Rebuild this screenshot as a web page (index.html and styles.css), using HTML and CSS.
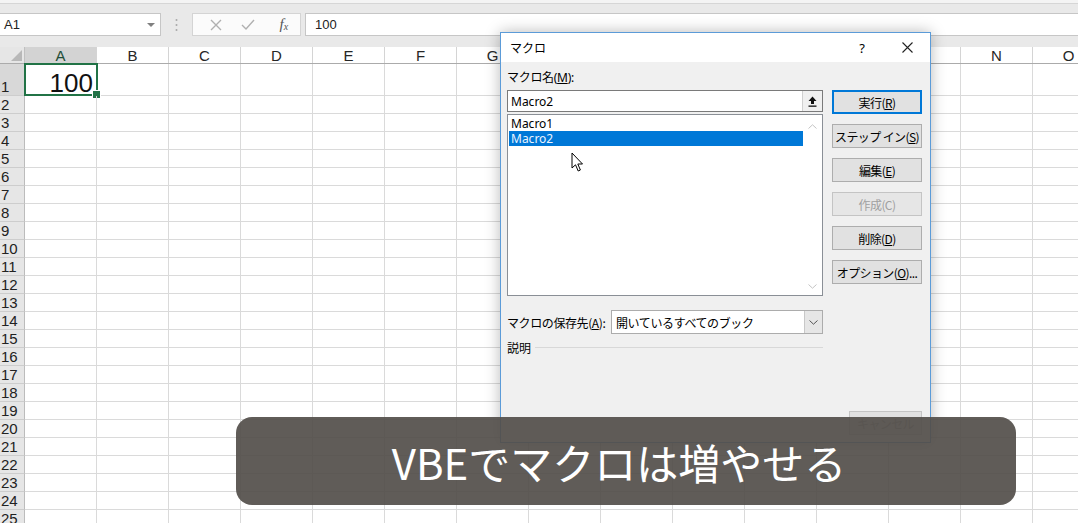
FILE: index.html
```html
<!DOCTYPE html>
<html lang="ja">
<head>
  <meta charset="UTF-8">
  <title>マクロ</title>
  <link rel="stylesheet" href="styles.css">
</head>
<body>

  <div class="ribbon-edge"></div>

  <div class="formula-row">
    <div class="name-box"><span>A1</span><span class="caret"></span></div>
    <div class="grip">
      <svg width="3" height="14" viewBox="0 0 3 14"><circle cx="1.5" cy="2" r="1" fill="#a8a8a8"/><circle cx="1.5" cy="7" r="1" fill="#a8a8a8"/><circle cx="1.5" cy="12" r="1" fill="#a8a8a8"/></svg>
    </div>
    <div class="fx-box">
      <span class="fx-icon">
        <svg width="12" height="12" viewBox="0 0 12 12"><path d="M1 1 L11 11 M11 1 L1 11" stroke="#b0b0b0" stroke-width="1.4"/></svg>
      </span>
      <span class="fx-icon">
        <svg width="14" height="12" viewBox="0 0 14 12"><path d="M1 6 L5 10 L13 1" stroke="#b0b0b0" stroke-width="1.4" fill="none"/></svg>
      </span>
      <span class="fx-icon fx-text"><i>f<sub>x</sub></i></span>
    </div>
    <div class="formula-input">100</div>
  </div>

  <div class="gap-bar"></div>

  <div class="sheet">
    <div class="col-headers">
      <div class="corner"></div>
      <div class="col-h sel">A</div>
      <div class="col-h">B</div>
      <div class="col-h">C</div>
      <div class="col-h">D</div>
      <div class="col-h">E</div>
      <div class="col-h">F</div>
      <div class="col-h">G</div>
      <div class="col-h">H</div>
      <div class="col-h">I</div>
      <div class="col-h">J</div>
      <div class="col-h">K</div>
      <div class="col-h">L</div>
      <div class="col-h">M</div>
      <div class="col-h">N</div>
      <div class="col-h">O</div>
    </div>

    <div class="row r1">
      <div class="row-h">1</div>
      <div class="cells"><div class="active-cell">100</div></div>
    </div>
    <div class="row"><div class="row-h">2</div><div class="cells"></div></div>
    <div class="row"><div class="row-h">3</div><div class="cells"></div></div>
    <div class="row"><div class="row-h">4</div><div class="cells"></div></div>
    <div class="row"><div class="row-h">5</div><div class="cells"></div></div>
    <div class="row"><div class="row-h">6</div><div class="cells"></div></div>
    <div class="row"><div class="row-h">7</div><div class="cells"></div></div>
    <div class="row"><div class="row-h">8</div><div class="cells"></div></div>
    <div class="row"><div class="row-h">9</div><div class="cells"></div></div>
    <div class="row"><div class="row-h">10</div><div class="cells"></div></div>
    <div class="row"><div class="row-h">11</div><div class="cells"></div></div>
    <div class="row"><div class="row-h">12</div><div class="cells"></div></div>
    <div class="row"><div class="row-h">13</div><div class="cells"></div></div>
    <div class="row"><div class="row-h">14</div><div class="cells"></div></div>
    <div class="row"><div class="row-h">15</div><div class="cells"></div></div>
    <div class="row"><div class="row-h">16</div><div class="cells"></div></div>
    <div class="row"><div class="row-h">17</div><div class="cells"></div></div>
    <div class="row"><div class="row-h">18</div><div class="cells"></div></div>
    <div class="row"><div class="row-h">19</div><div class="cells"></div></div>
    <div class="row"><div class="row-h">20</div><div class="cells"></div></div>
    <div class="row"><div class="row-h">21</div><div class="cells"></div></div>
    <div class="row"><div class="row-h">22</div><div class="cells"></div></div>
    <div class="row"><div class="row-h">23</div><div class="cells"></div></div>
    <div class="row"><div class="row-h">24</div><div class="cells"></div></div>
    <div class="row"><div class="row-h">25</div><div class="cells"></div></div>
  </div>

  <!-- macro dialog -->
  <div class="dialog">
    <div class="dlg-title">
      <span>マクロ</span>
      <span class="dlg-help">?</span>
      <span class="dlg-close">
        <svg width="11" height="11" viewBox="0 0 11 11"><path d="M0.5 0.5 L10.5 10.5 M10.5 0.5 L0.5 10.5" stroke="#222" stroke-width="1.1"/></svg>
      </span>
    </div>

    <div class="dlg-body">
      <div class="dlg-main">
        <div class="dlg-left">
          <div class="lbl">マクロ名(<u>M</u>):</div>
          <div class="name-input">
            <span>Macro2</span>
            <span class="up-btn">
              <svg width="9" height="11" viewBox="0 0 9 11"><path d="M4.5 0.5 L8.5 5 L6 5 L6 8 L3 8 L3 5 L0.5 5 Z" fill="#111"/><rect x="0.5" y="9.5" width="8" height="1.3" fill="#111"/></svg>
            </span>
          </div>
          <div class="macro-list">
            <div class="items">
              <div class="item">Macro1</div>
              <div class="item selected">Macro2</div>
            </div>
            <div class="scroll">
              <svg width="9" height="5" viewBox="0 0 9 5"><path d="M0.5 4.5 L4.5 0.8 L8.5 4.5" stroke="#c4c4c4" fill="none"/></svg>
              <svg width="9" height="5" viewBox="0 0 9 5"><path d="M0.5 0.5 L4.5 4.2 L8.5 0.5" stroke="#c4c4c4" fill="none"/></svg>
            </div>
          </div>
        </div>

        <div class="dlg-right">
          <div class="btn default">実行(<u>R</u>)</div>
          <div class="btn">ステップ イン(<u>S</u>)</div>
          <div class="btn">編集(<u>E</u>)</div>
          <div class="btn disabled">作成(C)</div>
          <div class="btn">削除(<u>D</u>)</div>
          <div class="btn">オプション(<u>O</u>)...</div>
        </div>
      </div>

      <div class="store-row">
        <span class="store-lbl">マクロの保存先(<u>A</u>):</span>
        <div class="select">
          <span>開いているすべてのブック</span>
          <span class="select-btn">
            <svg width="9" height="5" viewBox="0 0 9 5"><path d="M0.5 0.5 L4.5 4.2 L8.5 0.5" stroke="#555" fill="none"/></svg>
          </span>
        </div>
      </div>

      <div class="desc-row">
        <span>説明</span>
        <span class="desc-line"></span>
      </div>

      <div class="dlg-foot">
        <div class="btn cancel">キャンセル</div>
      </div>
    </div>
  </div>

  <svg class="cursor" width="13" height="21" viewBox="0 0 13 21">
    <path d="M1 1 L1 16 L4.5 12.8 L7.2 19 L9.4 18 L6.8 12 L11.5 12 Z" fill="#fff" stroke="#000" stroke-width="1" stroke-linejoin="round"/>
  </svg>

  <div class="caption">VBEでマクロは増やせる</div>

</body>
</html>
```

FILE: styles.css
```css
* {
  box-sizing: border-box;
}

html, body {
  margin: 0;
}

body {
  width: 1078px;
  height: 523px;
  overflow: hidden;
  position: relative;
  background: #ffffff;
  font-family: "Liberation Sans", "Noto Sans CJK JP", sans-serif;
  color: #222;
}

/* top of the window */
.ribbon-edge {
  height: 12px;
  border-top: 3px solid #f4f4f4;
  background: linear-gradient(#d6d6d6 0 1px, #e9e9e9 1px);
}

.formula-row {
  display: flex;
  align-items: center;
  height: 25px;
  background: #e9e9e9;
}

.name-box {
  width: 161px;
  height: 23px;
  background: #fff;
  border: 1px solid #c6c6c6;
  border-left: none;
  display: flex;
  align-items: center;
  justify-content: space-between;
  padding: 0 5px 0 4px;
  font-size: 13px;
}

.caret {
  border-left: 4px solid transparent;
  border-right: 4px solid transparent;
  border-top: 4px solid #808080;
}

.grip {
  width: 31px;
  display: flex;
  justify-content: center;
}

.fx-box {
  width: 109px;
  height: 23px;
  background: #fbfbfb;
  border: 1px solid #d4d4d4;
  display: flex;
  align-items: center;
  padding-left: 7px;
}

.fx-icon {
  width: 35px;
  display: flex;
  justify-content: center;
}

.fx-text {
  font-family: "Liberation Serif", serif;
  font-size: 15px;
  color: #555;
  margin-left: 3px;
}

.fx-text sub {
  font-size: 10px;
  vertical-align: -1px;
}

.formula-input {
  margin-left: 4px;
  flex: 1;
  height: 23px;
  background: #fff;
  border: 1px solid #c6c6c6;
  border-right: none;
  padding-left: 9px;
  font-size: 13px;
  line-height: 21px;
}

.gap-bar {
  height: 10px;
  background: #e9e9e9;
}

/* sheet */
.col-headers {
  display: flex;
  height: 17px;
  background: #fff;
  border-bottom: 1px solid #ababab;
}

.corner {
  width: 25px;
  flex: none;
  background: #e6e6e6;
  border-right: 1px solid #c0c0c0;
  position: relative;
}

.corner::after {
  content: "";
  position: absolute;
  right: 2px;
  bottom: 2px;
  border-left: 11px solid transparent;
  border-bottom: 11px solid #b8b8b8;
}

.col-h {
  width: 72px;
  flex: none;
  border-right: 1px solid #d4d4d4;
  text-align: center;
  font-size: 15px;
  line-height: 18px;
  color: #262626;
}

.col-h.sel {
  background: #d3d3d3;
  color: #1f4e38;
}

.row {
  display: flex;
  height: 18px;
}

.row.r1 {
  height: 32px;
}

.row-h {
  width: 25px;
  flex: none;
  background: #e6e6e6;
  border-right: 1px solid #bcbcbc;
  border-bottom: 1px solid #cdcdcd;
  font-size: 15px;
  line-height: 16px;
  padding-left: 1px;
  display: flex;
  align-items: flex-end;
}

.r1 .row-h {
  background: #d8d8d8;
}

.cells {
  flex: 1;
  position: relative;
  background: repeating-linear-gradient(90deg, transparent 0 71px, #dadada 71px 72px);
  border-bottom: 1px solid #dadada;
}

.active-cell {
  position: absolute;
  left: -1px;
  top: -1px;
  width: 74px;
  height: 33px;
  border: 2px solid #217346;
  font-size: 26px;
  line-height: 26px;
  padding-top: 5px;
  text-align: right;
  padding-right: 3px;
  color: #111;
}

.active-cell::after {
  content: "";
  position: absolute;
  right: -5px;
  bottom: -5px;
  width: 7px;
  height: 7px;
  background: #217346;
  border: 1px solid #fff;
}

/* dialog */
.dialog {
  position: absolute;
  left: 500px;
  top: 32px;
  width: 431px;
  height: 411px;
  background: #f0f0f0;
  border: 1px solid #5b9bd8;
  box-shadow: 0 0 14px rgba(0, 0, 0, 0.28);
  font-family: "Noto Sans", "Noto Sans CJK JP", sans-serif;
  font-size: 12px;
  color: #000;
}

.dlg-title {
  height: 29px;
  background: #fff;
  display: flex;
  align-items: center;
  padding-left: 9px;
  font-family: "Noto Sans CJK JP", sans-serif;
}

.dlg-help {
  margin-left: auto;
  width: 20px;
  text-align: center;
  font-family: "Noto Sans", sans-serif;
  font-size: 13px;
  margin-right: 12px;
}

.dlg-close {
  width: 46px;
  display: flex;
  justify-content: center;
}

.dlg-body {
  padding: 9px 8px 0 6px;
}

.dlg-main {
  display: flex;
  gap: 9px;
}

.dlg-left {
  width: 316px;
}

.lbl {
  height: 14px;
  line-height: 14px;
  margin-bottom: 5px;
  letter-spacing: -0.3px;
}

.name-input {
  height: 22px;
  border: 1px solid #7a7a7a;
  background: #fff;
  display: flex;
  align-items: center;
  padding-left: 3px;
}

.up-btn {
  margin-left: auto;
  width: 20px;
  height: 20px;
  background: #f0f0f0;
  border-left: 1px solid #d0d0d0;
  display: flex;
  align-items: center;
  justify-content: center;
}

.macro-list {
  margin-top: 2px;
  height: 182px;
  border: 1px solid #8a8f96;
  background: #fff;
  display: flex;
}

.items {
  flex: 1;
  padding: 1px 0 0 1px;
}

.item {
  height: 15px;
  line-height: 15px;
  padding-left: 2px;
}

.item.selected {
  background: #0078d7;
  color: #eaf4ff;
}

.scroll {
  width: 19px;
  display: flex;
  flex-direction: column;
  justify-content: space-between;
  align-items: center;
  padding: 9px 0 6px;
}

.dlg-right {
  padding-top: 19px;
  display: flex;
  flex-direction: column;
  gap: 10px;
}

.btn {
  width: 90px;
  height: 24px;
  border: 1px solid #adadad;
  background: #e1e1e1;
  display: flex;
  align-items: center;
  justify-content: center;
  white-space: nowrap;
  letter-spacing: -0.6px;
  font-family: "Noto Sans CJK JP", sans-serif;
}

.btn.default {
  border: 2px solid #0078d7;
}

.btn.disabled {
  color: #a0a0a0;
  border-color: #c4c4c4;
  background: #e6e6e6;
}

.store-row {
  display: flex;
  align-items: center;
  margin-top: 14px;
  width: 316px;
}

.store-lbl {
  width: 104px;
  flex: none;
  letter-spacing: -0.4px;
  white-space: nowrap;
  font-family: "Noto Sans CJK JP", sans-serif;
}

.select {
  flex: 1;
  height: 24px;
  border: 1px solid #acacac;
  background: #fff;
  display: flex;
  align-items: center;
  padding-left: 4px;
  letter-spacing: -0.4px;
  font-family: "Noto Sans CJK JP", sans-serif;
}

.select-btn {
  margin-left: auto;
  width: 18px;
  height: 22px;
  background: #e6e6e6;
  border-left: 1px solid #c8c8c8;
  display: flex;
  align-items: center;
  justify-content: center;
}

.desc-row {
  display: flex;
  align-items: center;
  gap: 4px;
  margin-top: 6px;
  width: 316px;
  height: 14px;
  font-family: "Noto Sans CJK JP", sans-serif;
}

.desc-line {
  flex: 1;
  height: 1px;
  background: #d8d8d8;
}

.dlg-foot {
  display: flex;
  justify-content: flex-end;
  margin-top: 57px;
}

.btn.cancel {
  width: 73px;
  color: #a0a0a0;
  border-color: #c4c4c4;
}

/* mouse pointer over the list */
.cursor {
  position: absolute;
  left: 571px;
  top: 152px;
}

/* video caption */
.caption {
  position: absolute;
  left: 236px;
  top: 417px;
  width: 780px;
  height: 88px;
  border-radius: 16px;
  background: rgba(82, 78, 74, 0.92);
  color: #fff;
  font-family: "Noto Sans CJK JP", sans-serif;
  font-size: 42px;
  display: flex;
  align-items: center;
  justify-content: center;
  padding-right: 14px;
}
```
